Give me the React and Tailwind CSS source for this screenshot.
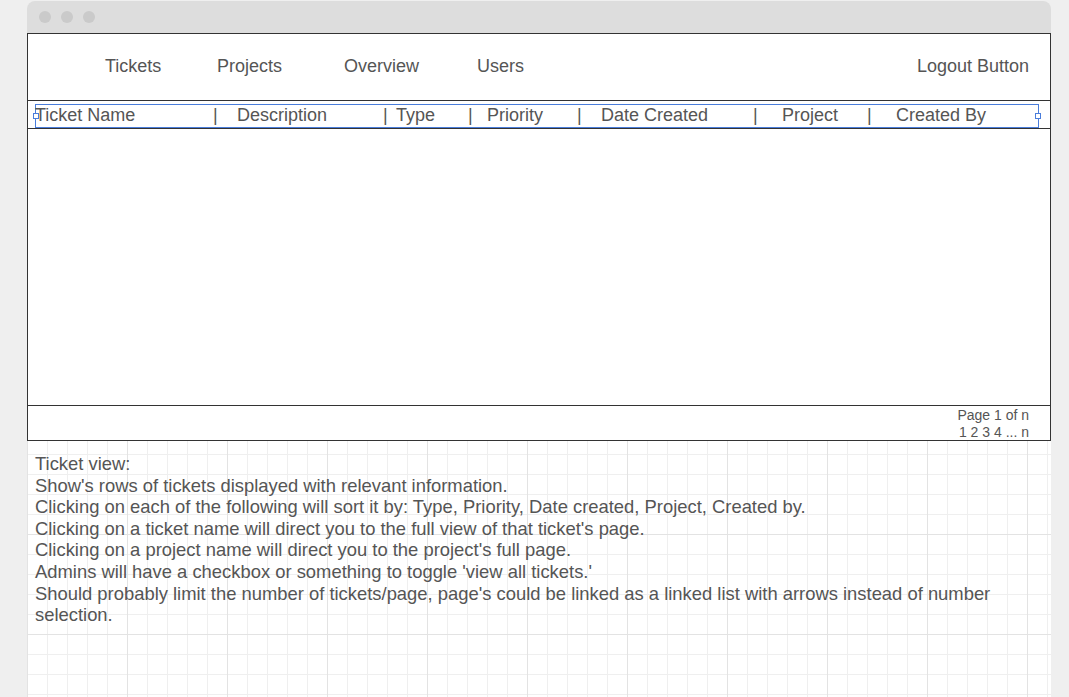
const navItems = [
  { label: "Tickets", w: "w-[112px]" },
  { label: "Projects", w: "w-[127px]" },
  { label: "Overview", w: "w-[133px]" },
  { label: "Users", w: "w-[100px]" },
];

const columns = [
  { label: "Ticket Name", w: "-ml-px w-[178px]" },
  { label: "|", w: "w-[24px]" },
  { label: "Description", w: "w-[146px]" },
  { label: "|", w: "w-[13px]" },
  { label: "Type", w: "w-[72px]" },
  { label: "|", w: "w-[19px]" },
  { label: "Priority", w: "w-[90px]" },
  { label: "|", w: "w-[24px]" },
  { label: "Date Created", w: "w-[152px]" },
  { label: "|", w: "w-[29px]" },
  { label: "Project", w: "w-[85px]" },
  { label: "|", w: "w-[29px]" },
  { label: "Created By", w: "w-[110px]" },
];

const notes = [
  "Ticket view:",
  "Show's rows of tickets displayed with relevant information.",
  "Clicking on each of the following will sort it by: Type, Priority, Date created, Project, Created by.",
  "Clicking on a ticket name will direct you to the full view of that ticket's page.",
  "Clicking on a project name will direct you to the project's full page.",
  "Admins will have a checkbox or something to toggle 'view all tickets.'",
  "Should probably limit the number of tickets/page, page's could be linked as a linked list with arrows instead of number selection.",
];

export default function App() {
  return (
    <div className="h-[697px] overflow-hidden bg-[#efefef] pl-[27px] pt-px font-['Liberation_Sans',Arial,sans-serif] text-[#555555]">
      <div className="w-[1024px] overflow-hidden rounded-t-lg">
        <div className="flex h-[32px] items-center gap-[10px] bg-[#dddddd] pl-[12px]">
          <span className="h-[12px] w-[12px] rounded-full bg-[#cacaca]" />
          <span className="h-[12px] w-[12px] rounded-full bg-[#cacaca]" />
          <span className="h-[12px] w-[12px] rounded-full bg-[#cacaca]" />
        </div>

        <div className="h-[700px] bg-white bg-[linear-gradient(to_right,#e3e3e3_1px,transparent_1px),linear-gradient(to_bottom,#e3e3e3_1px,transparent_1px),linear-gradient(to_right,#efefef_1px,transparent_1px),linear-gradient(to_bottom,#efefef_1px,transparent_1px)] [background-position:0_1px] [background-size:100px_100px,100px_100px,20px_20px,20px_20px]">
          <div className="flex h-[408px] flex-col border border-[#333333] bg-white">
            <nav className="flex h-[67px] shrink-0 items-center border-b border-[#333333] pb-[2px] text-[18px]">
              <div className="ml-[77px] flex">
                {navItems.map((item) => (
                  <span className={item.w} key={item.label}>
                    {item.label}
                  </span>
                ))}
              </div>
              <span className="ml-auto mr-[21px]">Logout Button</span>
            </nav>

            <div className="h-[28px] shrink-0 border-b border-[#333333] pl-[7px] pt-[3px]">
              <div className="relative h-[24px] w-[1004px] border border-[#4a7ddb] text-[18px] leading-none">
                <div className="flex h-full items-center pb-[2px]">
                  {columns.map((col, i) => (
                    <span className={`${col.w} shrink-0 whitespace-nowrap`} key={i}>
                      {col.label}
                    </span>
                  ))}
                </div>
                <span className="absolute left-[-3px] top-[8px] h-[6px] w-[6px] border border-[#4a7ddb] bg-white" />
                <span className="absolute right-[-3px] top-[8px] h-[6px] w-[6px] border border-[#4a7ddb] bg-white" />
              </div>
            </div>

            <div className="flex-1" />

            <div className="h-[35px] shrink-0 border-t border-[#333333] pr-[21px] pt-px text-right text-[14px] leading-[17px]">
              <p>Page 1 of n</p>
              <p>1 2 3 4 ... n</p>
            </div>
          </div>

          <div className="w-[1010px] pl-[8px] pt-[12px] text-[18.4px] leading-[21.6px]">
            {notes.map((line) => (
              <p key={line}>{line}</p>
            ))}
          </div>
        </div>
      </div>
    </div>
  );
}
